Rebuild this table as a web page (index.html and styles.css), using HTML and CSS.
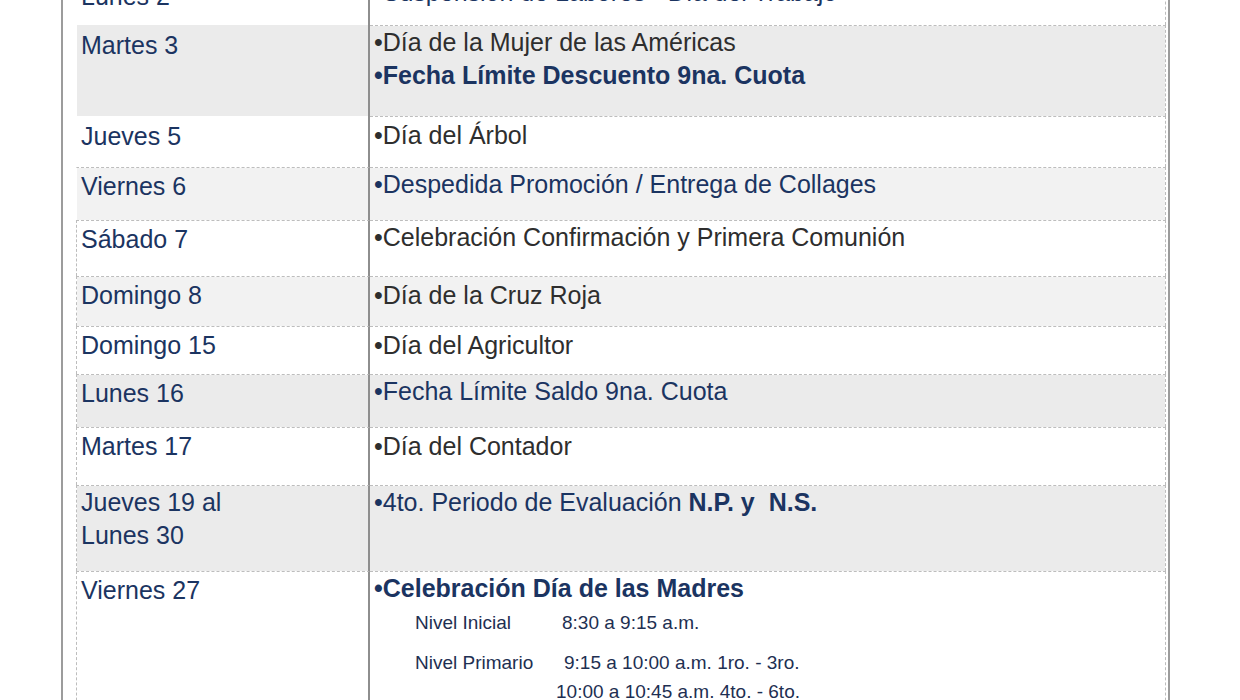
FILE: index.html
```html
<!DOCTYPE html>
<html lang="es">
<head>
  <meta charset="UTF-8">
  <title>Calendario - Mayo</title>
  <link rel="stylesheet" href="styles.css">
</head>
<body>
  <div class="sheet">
    <div class="calendar">
      <div class="day">Lunes 2</div>
      <div class="event first navy">•Suspensión de Labores - Día del Trabajo</div>

      <div class="day shade">Martes 3</div>
      <div class="event tight shade">
        <p>•Día de la Mujer de las Américas</p>
        <p class="navy"><b>•Fecha Límite Descuento 9na. Cuota</b></p>
      </div>

      <div class="day">Jueves 5</div>
      <div class="event">•Día del Árbol</div>

      <div class="day lined light">Viernes 6</div>
      <div class="event tight light navy">•Despedida Promoción / Entrega de Collages</div>

      <div class="day lined boxed">Sábado 7</div>
      <div class="event tight">•Celebración Confirmación y Primera Comunión</div>

      <div class="day lined boxed light">Domingo 8</div>
      <div class="event light">•Día de la Cruz Roja</div>

      <div class="day lined boxed">Domingo 15</div>
      <div class="event">•Día del Agricultor</div>

      <div class="day lined boxed shade">Lunes 16</div>
      <div class="event tight shade navy">•Fecha Límite Saldo 9na. Cuota</div>

      <div class="day lined boxed">Martes 17</div>
      <div class="event">•Día del Contador</div>

      <div class="day lined boxed tight shade">
        <p>Jueves 19 al</p>
        <p>Lunes 30</p>
      </div>
      <div class="event tight shade navy">•4to. Periodo de Evaluación <b>N.P. y &nbsp;N.S.</b></div>

      <div class="day lined boxed">Viernes 27</div>
      <div class="event tight">
        <p class="navy"><b>•Celebración Día de las Madres</b></p>
        <div class="sched">
          <div class="sched-item">
            <span>Nivel Inicial</span>
            <span>8:30 a 9:15 a.m.</span>
          </div>
          <div class="sched-item">
            <span>Nivel Primario</span>
            <span class="times">
              <span class="t-first">9:15 a 10:00 a.m. 1ro. - 3ro.</span>
              <span class="t-cont">10:00 a 10:45 a.m. 4to. - 6to.</span>
            </span>
          </div>
        </div>
      </div>
    </div>
  </div>
</body>
</html>
```

FILE: styles.css
```css
* {
  margin: 0;
  padding: 0;
  box-sizing: border-box;
}

body {
  background: #fff;
  font-family: "Liberation Sans", Arial, sans-serif;
  overflow: hidden;
}

/* page edges of the printed sheet */
.sheet {
  width: 1109px;
  margin: -24px 0 0 61px;
  padding: 0 2px 0 13px;
  border-left: 2px solid #9c9c9c;
  border-right: 2px solid #9c9c9c;
}

.calendar {
  display: grid;
  grid-template-columns: 294px 796px;
  grid-template-rows: 49px 91px 51px 53px 56px 50px 48px 53px 58px 86px 160px;
  font-size: 25px;
  line-height: 33px;
}

.day {
  padding: 4px 0 0 4px;
  border-left: 1px dashed transparent;
  border-right: 2px solid #8e8e8e;
  background-clip: padding-box;
  color: #1b3461;
}

.day.lined {
  padding-top: 2px;
  border-top: 1px dashed #bdbdbd;
}

.day.boxed {
  border-left-color: #bdbdbd;
}

.day.tight {
  padding-top: 0;
}

.event {
  padding: 2px 0 0 4px;
  border-top: 1px dashed #bdbdbd;
  border-right: 1px dashed #bdbdbd;
  background-clip: padding-box;
  color: #2e2e2e;
  white-space: nowrap;
}

.event.first {
  border-top: none;
  padding-top: 0;
}

.event.tight {
  padding-top: 0;
}

.shade {
  background-color: #ebebeb;
}

.light {
  background-color: #f2f2f2;
}

.navy {
  color: #1b3461;
}

b {
  font-weight: bold;
}

/* horarios del día de la madre */
.sched {
  display: flex;
  flex-direction: column;
  gap: 11px;
  margin: 3px 0 0 41px;
  font-size: 19px;
  line-height: 29px;
  color: #1e2f52;
}

.sched-item {
  display: grid;
  grid-template-columns: 147px auto;
}

.times {
  display: flex;
  flex-direction: column;
}

.t-first {
  padding-left: 2px;
}

.t-cont {
  margin-left: -6px;
}
```
